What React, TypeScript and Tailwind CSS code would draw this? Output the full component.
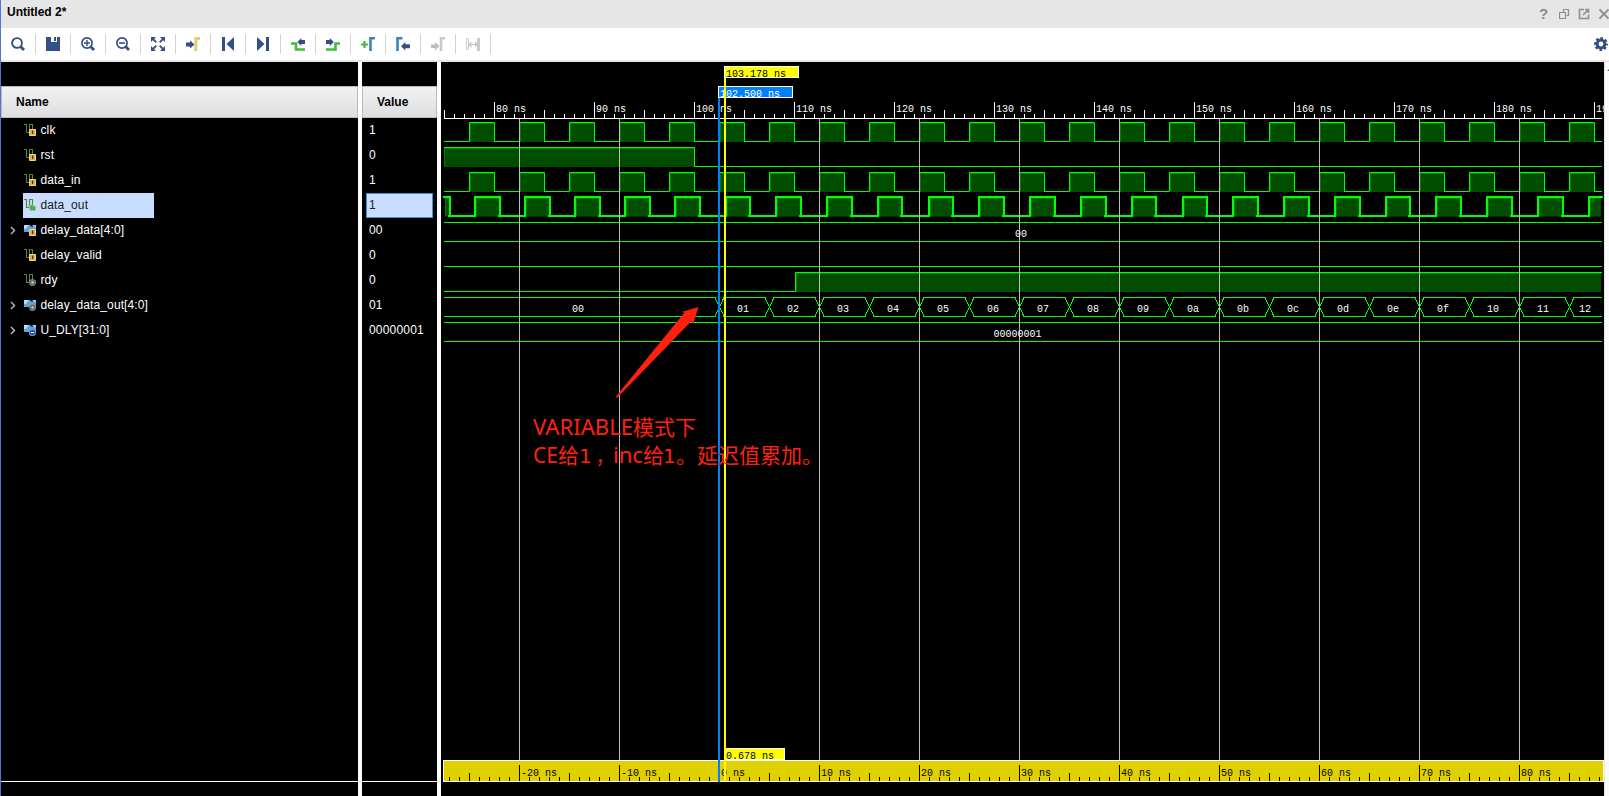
import type { ReactNode } from 'react';

type IconKind = 'in' | 'out' | 'wire' | 'int';

interface Signal {
  name: string;
  value: string;
  kind: IconKind;
  bus?: boolean;
  selected?: boolean;
}

const SIGNALS: Signal[] = [
  { name: 'clk', value: '1', kind: 'in' },
  { name: 'rst', value: '0', kind: 'in' },
  { name: 'data_in', value: '1', kind: 'in' },
  { name: 'data_out', value: '1', kind: 'out', selected: true },
  { name: 'delay_data[4:0]', value: '00', kind: 'in', bus: true },
  { name: 'delay_valid', value: '0', kind: 'in' },
  { name: 'rdy', value: '0', kind: 'wire' },
  { name: 'delay_data_out[4:0]', value: '01', kind: 'wire', bus: true },
  { name: 'U_DLY[31:0]', value: '00000001', kind: 'int', bus: true },
];

const NAVY = '#334f85';
const GREEN = '#45b93c';
const TEAL = '#3b83b5';
const GRAY = '#bdbdbd';

const TOOLS: { id: string; icon: ReactNode }[] = [
  {
    id: 'search',
    icon: (
      <>
        <circle cx="6" cy="6" r="4.9" fill="none" stroke={NAVY} strokeWidth="1.9" />
        <path d="M9.8 9.8L13 13" stroke={NAVY} strokeWidth="2.8" />
      </>
    ),
  },
  {
    id: 'save',
    icon: (
      <>
        <path d="M0 0H5V5H11V0H14V14H0Z" fill={NAVY} />
        <path d="M8 0H10V4H8Z" fill={NAVY} />
      </>
    ),
  },
  {
    id: 'zoom-in',
    icon: (
      <>
        <circle cx="6" cy="6" r="5.1" fill="none" stroke={NAVY} strokeWidth="1.7" />
        <path d="M3 6H9M6 3V9" stroke={NAVY} strokeWidth="1.4" />
        <path d="M9.8 9.8L13 13" stroke={NAVY} strokeWidth="2.8" />
      </>
    ),
  },
  {
    id: 'zoom-out',
    icon: (
      <>
        <circle cx="6" cy="6" r="5.1" fill="none" stroke={NAVY} strokeWidth="1.7" />
        <path d="M3 6H9" stroke={NAVY} strokeWidth="1.6" />
        <path d="M9.8 9.8L13 13" stroke={NAVY} strokeWidth="2.8" />
      </>
    ),
  },
  {
    id: 'fit',
    icon: (
      <>
        <path d="M0 0H5L0 5ZM14 0V5L9 0ZM0 14V9L5 14ZM14 14H9L14 9Z" fill={NAVY} />
        <path d="M1.5 1.5L5.3 5.3M12.5 1.5L8.7 5.3M1.5 12.5L5.3 8.7M12.5 12.5L8.7 8.7" stroke={NAVY} strokeWidth="1.8" />
      </>
    ),
  },
  {
    id: 'goto-cursor',
    icon: (
      <>
        <path d="M0 5.5H4V3.5L8.5 7.5L4 11.5V9.5H0Z" fill={NAVY} />
        <path d="M9.8 14V1.5H14" fill="none" stroke="#e5cd71" strokeWidth="3" />
      </>
    ),
  },
  { id: 'first', icon: <path d="M1 0H4V14H1ZM13 0V14L5.5 7Z" fill={NAVY} /> },
  { id: 'last', icon: <path d="M1 0L8.5 7L1 14ZM10 0H13V14H10Z" fill={NAVY} /> },
  {
    id: 'prev-edge',
    icon: (
      <>
        <path d="M0 6.5H5V12.5H14" fill="none" stroke={GREEN} strokeWidth="2.6" />
        <path d="M6.3 5L10.3 1V3H14V7H10.3V9Z" fill={NAVY} />
      </>
    ),
  },
  {
    id: 'next-edge',
    icon: (
      <>
        <path d="M0 12.5H9.5V6.5H14" fill="none" stroke={GREEN} strokeWidth="2.6" />
        <path d="M7.8 5L3.8 1V3H0V7H3.8V9Z" fill={NAVY} />
      </>
    ),
  },
  {
    id: 'add-marker',
    icon: (
      <>
        <path d="M0 7.5H7M3.5 4V11" stroke={GREEN} strokeWidth="2.2" />
        <path d="M9.5 14V1.3H14" fill="none" stroke={TEAL} strokeWidth="2.6" />
      </>
    ),
  },
  {
    id: 'prev-marker',
    icon: (
      <>
        <path d="M1.5 14V1.3H6.5" fill="none" stroke={TEAL} strokeWidth="2.6" />
        <path d="M5 9.3L9.3 5V7.3H14V11.3H9.3V13.6Z" fill={NAVY} />
      </>
    ),
  },
  {
    id: 'next-marker',
    icon: (
      <>
        <path d="M0 7.5H4V5L8.3 9.3L4 13.6V11H0Z" fill={GRAY} />
        <path d="M10 14V1.3H14" fill="none" stroke="#cacaca" strokeWidth="2.6" />
      </>
    ),
  },
  {
    id: 'swap',
    icon: (
      <>
        <path d="M.6 1.5H2.5V12.5H.6Z" fill="#fff" stroke="#cacaca" />
        <path d="M11 1H14V14H11Z" fill="#cacaca" />
        <path d="M3.5 7.5H11M5.5 5L3.5 7.5L5.5 10M9 5L11 7.5L9 10" fill="none" stroke={GRAY} strokeWidth="1.2" />
      </>
    ),
  },
];

function TitleBar() {
  return (
    <div className="flex h-7 items-start justify-between bg-[#e6e6e6] pl-[6px]">
      <span className="mt-[4px] text-[12px] leading-4 font-bold text-black">Untitled 2*</span>
      <div className="mt-[7px] flex h-3.5 items-center">
        <span className="w-[20px] text-[15px] leading-[14px] font-bold text-[#8c8c8c]">?</span>
        <svg width="50" height="14" fill="none" stroke="#8f8f8f" strokeWidth="1.2">
          <path d="M4.5 5.5V2.5H9.5V8.5H7.5M.5 5.5H6.5V11.5H.5Z" />
          <path d="M25 2.5H20.5V11.5H29.5V7.5M24 8L29 3M26 2.5H29.5V6" strokeWidth="1.6" />
          <path d="M40.5 2.5L49.5 11.5M49.5 2.5L40.5 11.5" strokeWidth="1.9" />
        </svg>
      </div>
    </div>
  );
}

function Toolbar() {
  return (
    <div className="flex h-[34px] items-center justify-between border-b-2 border-[#e6e6e6] bg-white">
      <div className="flex">
        {TOOLS.map(t => (
          <button key={t.id} className="flex h-5 w-[35px] items-center justify-center border-r border-[#d4d4d4]">
            <svg width="14" height="14" viewBox="0 0 14 14">{t.icon}</svg>
          </button>
        ))}
      </div>
      <svg width="15" height="14" viewBox="0 0 15 14">
        <circle cx="7" cy="7" r="3.9" fill="none" stroke={NAVY} strokeWidth="3" />
        <circle cx="7" cy="7" r="5.7" fill="none" stroke={NAVY} strokeWidth="2.6" strokeDasharray="2.5 1.98" strokeDashoffset="1.25" />
      </svg>
    </div>
  );
}

function SignalIcon({ kind, bus }: { kind: IconKind; bus?: boolean }) {
  return (
    <svg width="12" height="12" viewBox="0 0 12 12" className="shrink-0">
      {bus ? (
        <>
          <path d="M0 1H6L8 3L10 1H12V8H9L7 6L5 8H0Z" fill="#58a6dc" />
          <path d="M0 1H5L2 5H0Z" fill="#b5def5" />
          <path d="M8 1H12V4Z" fill="#9dcdf0" />
        </>
      ) : (
        <path d="M0 .5H2.5V8.5H5.5V.5H8.5V8" fill="none" stroke="#568341" strokeWidth="1.1" />
      )}
      {kind === 'in' && (
        <>
          <path d="M5.5 5.5H11.5V11.5H5.5Z" fill="#e9a92d" stroke="#f0d590" />
          <path d="M8 6.5H9.2V10H8Z" fill="#473410" />
        </>
      )}
      {kind === 'out' && <path d="M5 6H8L11.5 7.5V11.5H6Z" fill="#4fae45" stroke="#94c69b" />}
      {kind === 'wire' && (
        <>
          <circle cx="8.5" cy="8.5" r="3.2" fill="#666" stroke="#aaa" strokeDasharray="1.5 .8" />
          <circle cx="8.5" cy="8.5" r="1.2" fill="#ccc" />
        </>
      )}
      {kind === 'int' && (
        <>
          <circle cx="8.5" cy="8.5" r="3.2" fill="#2c4f9c" stroke="#8ba4d4" />
          <path d="M7 8.5H10" stroke="#fff" />
        </>
      )}
    </svg>
  );
}

function NameColumn() {
  return (
    <div className="flex w-[357px] flex-col bg-black">
      <div className="mt-6 flex h-8 items-center border border-[#b9bbb9] bg-linear-to-b from-[#f2f2f2] to-[#dedee0] pl-[14px] text-[12px] font-bold text-black">
        Name
      </div>
      {SIGNALS.map(s => (
        <div key={s.name} className="flex h-[25px] items-center">
          <div className="w-[22px] pb-px pl-[9px]">
            {s.bus && (
              <svg width="6" height="9" fill="none" stroke="#c8c8c8" strokeWidth="1.3">
                <path d="M1 1L4.5 4.5L1 8" />
              </svg>
            )}
          </div>
          <div className={`flex h-[25px] items-center gap-[4.5px] pb-px pl-px text-[12px] tracking-[0.11px] ${s.selected ? 'w-[131px] bg-[#c9deff] text-[#202020]' : 'text-white'}`}>
            <SignalIcon kind={s.kind} bus={s.bus} />
            {s.name}
          </div>
        </div>
      ))}
      <div className="mt-auto h-[15px] border-t border-white" />
    </div>
  );
}

function ValueColumn() {
  return (
    <div className="ml-1 flex w-[75px] flex-col bg-black">
      <div className="mt-6 flex h-8 items-center border border-[#b9bbb9] bg-linear-to-b from-[#f2f2f2] to-[#dedee0] pl-[14px] text-[12px] font-bold text-black">
        Value
      </div>
      {SIGNALS.map(s => (
        <div
          key={s.name}
          className={`mx-1 flex h-[25px] items-center border pb-px pl-[2px] text-[12px] tracking-[0.2px] ${s.selected ? 'border-[#3f94cf] bg-[#c9deff] text-[#202020]' : 'border-transparent text-white'}`}
        >
          {s.value}
        </div>
      ))}
      <div className="mt-auto h-[15px] border-t border-white" />
    </div>
  );
}

// Plot area: 1163 x 734, 10px per ns, 75 ns at x = 3
const ORIGIN = 3;
const END = 1161;
const WAVE = '#00ff00';
const FILL = '#004d00';
const EDGE = '#008000';

const range = (n: number) => Array.from({ length: n }, (_, i) => i);
const rowTop = (row: number) => 60 + row * 25;

interface LabelProps {
  x: number;
  y: number;
  text: string;
  color?: string;
}

function Label({ x, y, text, color = '#fff' }: LabelProps) {
  return (
    <text
      x={x}
      y={y}
      fill={color}
      textLength={text.length * 6}
      lengthAdjust="spacingAndGlyphs"
      className="font-['Liberation_Mono',monospace] text-[11px] whitespace-pre"
    >
      {text}
    </text>
  );
}

// Pulses are [rise, fall] pairs in pixels
function Wave({ row, pulses, width = 1 }: { row: number; pulses: [number, number][]; width?: number }) {
  const off = width / 2;
  const top = rowTop(row) + (width === 2 ? 0 : 0.5);
  const low = top + 19;
  let d = '';
  let x = ORIGIN;
  pulses.forEach(([rise, fall]) => {
    if (rise > ORIGIN) d += `M${x} ${low}H${rise + off}V${top}`;
    else d += `M${ORIGIN} ${top}`;
    d += `H${Math.min(fall + off, END)}`;
    if (fall < END) d += `V${low}`;
    x = fall;
  });
  if (x < END) d += `M${x} ${low}H${END}`;
  return (
    <g>
      {pulses.map(([rise, fall]) => {
        const end = Math.min(fall, END - 1);
        return (
          <g key={rise}>
            <rect x={rise + width} y={top} width={Math.max(end - rise - width, 0)} height={19.5} fill={FILL} />
            <path d={`M${rise + width + 0.5} ${low}V${top + off + 0.5}H${end}`} fill="none" stroke={EDGE} />
          </g>
        );
      })}
      <path d={d} fill="none" stroke={WAVE} strokeWidth={width} strokeLinecap={width === 2 ? 'square' : 'butt'} />
    </g>
  );
}

function Bus({ row, edges = [] }: { row: number; edges?: number[] }) {
  const top = rowTop(row) + 0.5;
  const low = top + 19;
  const stops = [ORIGIN - 5, ...edges, END + 4];
  return (
    <path
      d={stops
        .slice(1)
        .map((end, i) => {
          const a = stops[i] + 5;
          const b = end - 4;
          const cross = i < edges.length
            ? `M${b} ${top}L${end + 5} ${low}M${b} ${low}L${end + 5} ${top}`
            : '';
          return `M${a} ${top}H${b}M${a} ${low}H${b}${cross}`;
        })
        .join('')}
      fill="none"
      stroke={WAVE}
      shapeRendering="crispEdges"
    />
  );
}

const CLOCK = range(23).map(i => [28 + i * 50, 53 + i * 50] as [number, number]);

// the period of data_out stretches once the tap delay starts to grow
const DATA_OUT: [number, number][] = [
  [2, 8],
  ...range(5).map(i => [33 + i * 50, 58 + i * 50] as [number, number]),
  ...range(18).map(i => [Math.round(283.5 + i * 50.78), Math.round(308 + i * 50.8)] as [number, number]),
];

const TAPS = range(18).map(i => ({
  x: 278 + i * 50,
  text: (i + 1).toString(16).padStart(2, '0'),
}));

function TopRuler() {
  return (
    <g>
      <path d={`M${ORIGIN} 56.5H${END}`} stroke="#fff" />
      {range(116).map(i => {
        const h = i % 10 === 5 ? 17 : i % 5 === 0 ? 9 : 5;
        return <rect key={i} x={ORIGIN + i * 10} y={57 - h} width="1" height={h} fill="#fff" />;
      })}
      {range(12).map(i => (
        <Label key={i} x={55 + i * 100} y={50} text={`${80 + i * 10} ns`} />
      ))}
    </g>
  );
}

function BottomRuler() {
  return (
    <g>
      <rect x="2.5" y="698.5" width="1160" height="21" fill="#e0d000" stroke="#fff" />
      {range(116).map(i => {
        const h = i % 10 === 7 ? 16 : i % 5 === 2 ? 8 : 4;
        return <rect key={i} x={8 + i * 10} y={719 - h} width="1" height={h} fill="#000" />;
      })}
      {range(11).map(i => (
        <Label key={i} x={80 + i * 100} y={714} text={`${-20 + i * 10} ns`} color="#000" />
      ))}
    </g>
  );
}

function WavePane() {
  return (
    <svg width="1163" height="734" viewBox="0 0 1163 734" className="ml-1 block shrink-0 bg-black">
      <TopRuler />
      <Wave row={0} pulses={CLOCK} />
      <Wave row={1} pulses={[[2, 253]]} />
      <Wave row={2} pulses={CLOCK} />
      <Wave row={3} pulses={DATA_OUT} width={2} />
      <Bus row={4} />
      <Wave row={5} pulses={[]} />
      <Wave row={6} pulses={[[354, 1200]]} />
      <Bus row={7} edges={TAPS.map(t => t.x)} />
      <Bus row={8} />
      {range(11).map(i => (
        <rect key={i} x={78 + i * 100} y="57" width="1" height="641" fill="#c0c0c0" />
      ))}
      <Label x={574} y={175} text="00" />
      <Label x={131} y={250} text="00" />
      {TAPS.map(t => (
        <Label key={t.x} x={t.x === 1128 ? 1138 : t.x + 18} y={250} text={t.text} />
      ))}
      <Label x={552.5} y={275} text="00000001" />
      <BottomRuler />

      <rect x="277.5" y="24.5" width="74" height="11" fill="#0080ff" stroke="#fff" />
      <Label x={279} y={35} text="102.500 ns" />
      <rect x="277" y="36" width="2" height="684" fill="#0080ff" />
      <rect x="283.5" y="4.5" width="74" height="11" fill="#ff0" stroke="#fff" />
      <Label x={285} y={15} text="103.178 ns" color="#000" />
      <rect x="283.5" y="686.5" width="60" height="11" fill="#ff0" stroke="#fff" />
      <Label x={285} y={697} text="0.678 ns" color="#000" />
      <rect x="283" y="16" width="2" height="704" fill="#ff0" />

      <path d="M175 334.5L243.5 250.5L240.5 250L257.5 245L252 262L250.5 259L176 336Z" fill="#ff2010" />
      <g fill="#ff2010" className="font-['Noto_Sans','Noto_Sans_CJK_SC',sans-serif] text-[21px]">
        <text x="92" y="373" textLength="100" lengthAdjust="spacingAndGlyphs">VARIABLE</text>
        <text x="192" y="373">模式下</text>
        <text x="92" y="401">CE给</text>
        <text x="138" y="401" className="font-['DejaVu_Sans'] text-[20px]">1</text>
        <text x="155" y="401" textLength="17" lengthAdjust="spacingAndGlyphs">，</text>
        <text x="172" y="401" textLength="30" lengthAdjust="spacingAndGlyphs">inc</text>
        <text x="202" y="401">给</text>
        <text x="222" y="401" className="font-['DejaVu_Sans'] text-[20px]">1</text>
        <text x="235" y="401">。延迟值累加。</text>
      </g>
    </svg>
  );
}

export default function App() {
  return (
    <div className="flex h-[796px] w-[1609px] flex-col overflow-hidden border-l border-[#4a7bd0] bg-white font-['Liberation_Sans',Arial,sans-serif]">
      <TitleBar />
      <Toolbar />
      <div className="flex min-h-0 flex-1">
        <NameColumn />
        <ValueColumn />
        <WavePane />
        <div className="flex flex-1 justify-end border-l border-[#e6e6e6] bg-[#fafafa] pt-[7px]">
          <svg width="2" height="3"><path d="M2 0V2H0Z" fill="#666" /></svg>
        </div>
      </div>
    </div>
  );
}
